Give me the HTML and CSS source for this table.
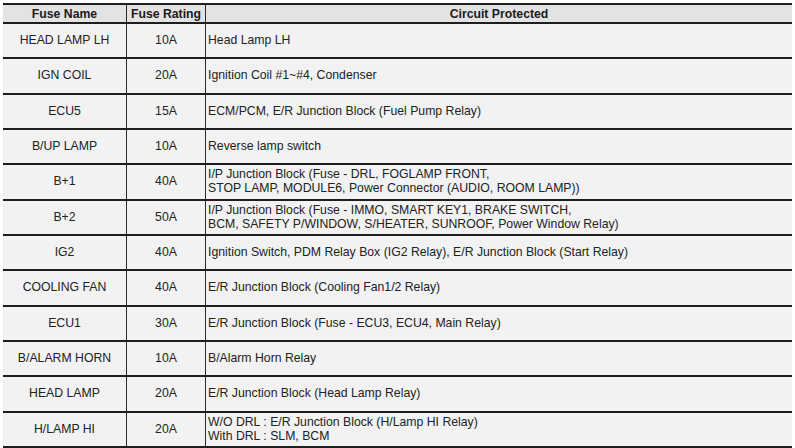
FILE: index.html
```html
<!DOCTYPE html>
<html>
<head>
<meta charset="utf-8">
<link rel="stylesheet" href="styles.css">
</head>
<body>
<div class="fuse-table">
  <div class="cell head">Fuse Name</div>
  <div class="cell head">Fuse Rating</div>
  <div class="cell head">Circuit Protected</div>

  <div class="cell c">HEAD LAMP LH</div><div class="cell c">10A</div><div class="cell l">Head Lamp LH</div>
  <div class="cell c">IGN COIL</div><div class="cell c">20A</div><div class="cell l">Ignition Coil #1~#4, Condenser</div>
  <div class="cell c">ECU5</div><div class="cell c">15A</div><div class="cell l">ECM/PCM, E/R Junction Block (Fuel Pump Relay)</div>
  <div class="cell c">B/UP LAMP</div><div class="cell c">10A</div><div class="cell l">Reverse lamp switch</div>
  <div class="cell c">B+1</div><div class="cell c">40A</div><div class="cell l">I/P Junction Block (Fuse - DRL, FOGLAMP FRONT,<br>STOP LAMP, MODULE6, Power Connector (AUDIO, ROOM LAMP))</div>
  <div class="cell c">B+2</div><div class="cell c">50A</div><div class="cell l">I/P Junction Block (Fuse - IMMO, SMART KEY1, BRAKE SWITCH,<br>BCM, SAFETY P/WINDOW, S/HEATER, SUNROOF, Power Window Relay)</div>
  <div class="cell c">IG2</div><div class="cell c">40A</div><div class="cell l">Ignition Switch, PDM Relay Box (IG2 Relay), E/R Junction Block (Start Relay)</div>
  <div class="cell c">COOLING FAN</div><div class="cell c">40A</div><div class="cell l">E/R Junction Block (Cooling Fan1/2 Relay)</div>
  <div class="cell c">ECU1</div><div class="cell c">30A</div><div class="cell l">E/R Junction Block (Fuse - ECU3, ECU4, Main Relay)</div>
  <div class="cell c">B/ALARM HORN</div><div class="cell c">10A</div><div class="cell l">B/Alarm Horn Relay</div>
  <div class="cell c">HEAD LAMP</div><div class="cell c">20A</div><div class="cell l">E/R Junction Block (Head Lamp Relay)</div>
  <div class="cell c">H/LAMP HI</div><div class="cell c">20A</div><div class="cell l">W/O DRL : E/R Junction Block (H/Lamp HI Relay)<br>With DRL : SLM, BCM</div>
</div>
</body>
</html>
```

FILE: styles.css
```css
html, body {
  margin: 0;
  padding: 0;
  background: #ffffff;
}
body {
  padding: 3px 0 0 3px;
  font-family: "Liberation Sans", Arial, sans-serif;
  font-size: 12.25px;
  color: #222222;
}
.fuse-table {
  display: grid;
  grid-template-columns: 123px 79px 587px;
  grid-template-rows: 19px;
  grid-auto-rows: 35.33px;
  width: 789px;
  border-top: 2px solid #1e1e1e;
  background: #f2f2f2;
}
.cell {
  box-sizing: border-box;
  border-bottom: 2px solid #1e1e1e;
  display: flex;
  align-items: center;
  line-height: 14px;
  padding-bottom: 1px;
}
.cell:nth-child(3n+2),
.cell:nth-child(3n) {
  border-left: 1px solid #2a2a2a;
}
.head {
  background: #e3e3e3;
  font-weight: bold;
  justify-content: center;
  color: #1a1a1a;
  padding-bottom: 0;
}
.c {
  justify-content: center;
}
.l {
  padding-left: 2px;
}
```
